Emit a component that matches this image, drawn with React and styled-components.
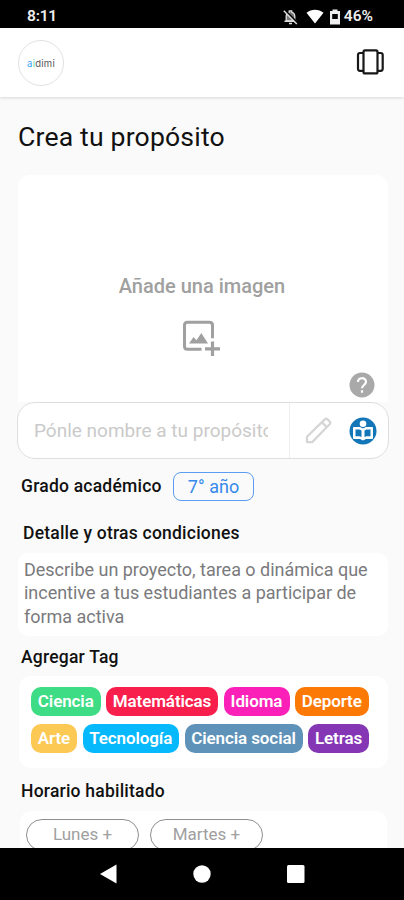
import React from "react";
import styled, { createGlobalStyle } from "styled-components";

const Global = createGlobalStyle`
  * { box-sizing: border-box; }
  body { margin: 0; background: #fafafa; font-family: Roboto, "Liberation Sans", sans-serif; }
  svg { display: block; flex: none; }
`;
const Screen = styled.div`
  width: 404px; height: 900px; overflow: hidden;
  display: flex; flex-direction: column; background: #fafafa; color: #111;
`;
const StatusBar = styled.div`
  height: 28px; flex: none; background: #000; color: #eee;
  display: flex; align-items: center; padding: 5px 31px 0 27px;
  font-size: 15.5px; line-height: 23px; font-weight: 600;
`;
const Clock = styled.span`flex: 1; letter-spacing: -0.2px;`;
const StatusIcons = styled.div`display: flex; align-items: center;`;
const WifiIcon = styled.svg`margin: 0 3px 0 8px;`;
const Battery = styled.span`font-size: 15.5px; margin-left: 1px;`;
const Header = styled.header`
  height: 69px; flex: none; background: #fff; padding: 0 20px 0 18px;
  display: flex; align-items: center; justify-content: space-between;
  box-shadow: 0 1px 3px rgba(0,0,0,.14); z-index: 1;
`;
const Logo = styled.div`
  width: 46px; height: 46px; border: 1px solid #e2e2e2; border-radius: 50%;
  display: flex; align-items: center; justify-content: center;
  font: 400 9.5px/12px Inter, sans-serif; color: #555; letter-spacing: .25px;
  padding-top: 2px;
`;
const LogoLetter = styled.span`color: ${p => p.$color};`;
const CarouselIcon = styled.svg`margin-bottom: 2px;`;
const Content = styled.main`
  flex: 1; min-height: 0; overflow: hidden; padding: 0 15px 0 17px;
  display: flex; flex-direction: column;
`;
const Title = styled.h1`
  margin: 25px 0 23px 1px; font-size: 26.6px; line-height: 30px; font-weight: 450;
  letter-spacing: .17px;
`;
const ImageCard = styled.section`
  height: 227px; flex: none; background: #fff; border-radius: 12px 12px 0 0;
  margin: 0 1px; padding: 99px 13px 0; color: #a0a0a0;
  display: flex; flex-direction: column; align-items: center;
`;
const ImageLabel = styled.div`font-size: 20px; line-height: 24px; font-weight: 500; margin-right: 2px;`;
const PictureIcon = styled.svg`margin: 22px 4px 0 0;`;
const HelpIcon = styled.svg`align-self: flex-end; margin-top: 15px;`;
const NameField = styled.div`
  height: 57px; flex: none; border: 1.5px solid #dedede; border-radius: 18px;
  background: #fff; display: flex; align-items: center; padding-left: 16px;
`;
const Placeholder = styled.div`
  width: 234px; overflow: hidden; white-space: nowrap; color: #cacaca;
  font-size: 19px; line-height: 26px;
`;
const FieldTools = styled.div`
  align-self: stretch; margin-left: 21px; flex: 1; border-left: 1px solid #eee;
  display: flex; align-items: center; padding-left: 15px; gap: 17px;
`;
const GradeRow = styled.div`
  display: flex; align-items: center; margin: 12px 0 0 4px; height: 30px; flex: none;
`;
const Label = styled.h2`
  margin: ${p => p.$margin || "0"}; font-size: 17.5px; line-height: 22px; font-weight: 500;
  letter-spacing: .22px; white-space: nowrap;
`;
const GradeLabel = styled(Label)`width: 152px;`;
const GradeChip = styled.span`
  width: 81px; height: 29px; border: 1.3px solid #5a9df2; border-radius: 8px;
  color: #3489ec; font-size: 18px; line-height: 28px; text-align: center;
`;
const Description = styled.p`
  margin: 9px 0 0 1px; width: 370px; height: 83px; flex: none; border-radius: 10px; background: #fff; color: #7a7a7d;
  padding: 5px 0 0 6px; font-size: 18px; line-height: 23.4px; letter-spacing: -.02px; white-space: pre;
`;
const TagCard = styled.div`
  margin: 8px 0 0 2px; width: 369px; height: 92px; flex: none; background: #fff; border-radius: 12px;
  padding: 11px 0 0 12px; display: flex; flex-direction: column; gap: 8px;
`;
const TagRow = styled.div`display: flex; gap: 5.5px;`;
const Tag = styled.span`
  width: ${p => p.$w}px; height: 29px; border-radius: 10px; background: ${p => p.$color};
  color: #fff; font-size: 17px; line-height: 28px; font-weight: 600; text-align: center;
  letter-spacing: -.1px; white-space: nowrap;
`;
const DayCard = styled.div`
  margin: 9px 0 0 3px; width: 367px; height: 60px; flex: none; background: #fff; border-radius: 12px;
  padding: 8px 0 0 6px; display: flex; gap: 11px;
`;
const Day = styled.span`
  width: 113px; height: 32px; border: 1px solid #8f8f8f; border-radius: 16px; color: #a0a0a0;
  font-size: 17px; line-height: 29px; text-align: center;
`;
const NavBar = styled.nav`
  height: 52px; flex: none; background: #000; display: flex; align-items: center;
  padding-left: 100px; gap: 76px; z-index: 1;
`;

const rows = [
  [["Ciencia", "#3edc85", 69.5], ["Matemáticas", "#f91f4d", 112], ["Idioma", "#fb20b8", 66], ["Deporte", "#fd7905", 73.5]],
  [["Arte", "#fcc954", 46], ["Tecnología", "#06b8fc", 96.5], ["Ciencia social", "#5e92b8", 118], ["Letras", "#8436b5", 61]],
];

export default function App() {
  return (
    <Screen>
      <Global />
      <StatusBar>
        <Clock>8:11</Clock>
        <StatusIcons>
          <svg width="15" height="16" viewBox="0 0 15 16">
            <path d="M3.2 12V7.5C3.2 5 4.5 3.7 6.3 3.2V1.8h2.4v1.4c1.8.5 3.1 1.8 3.1 4.3V12z" fill="#777" stroke="#ddd" strokeWidth="1.3" />
            <path d="M1.5 12.3h12M6 14.5h3" stroke="#ddd" strokeWidth="1.5" />
            <path d="M1.8 1.2 14.6 14" stroke="#000" strokeWidth="2" />
            <path d="M.8 1.8 13.8 15" stroke="#ddd" strokeWidth="1.5" />
          </svg>
          <WifiIcon width="18" height="15" viewBox="0 0 18 15">
            <path d="M.5 3.8C5.5-.2 12.5-.2 17.5 3.8L9 14.5z" fill="#fff" />
          </WifiIcon>
          <svg width="16" height="16" viewBox="0 0 16 16">
            <path d="M5.5 2V.5h5V2H13v13.5H3V2z" fill="#eee" />
            <path d="M5.2 5h5.6v5H5.2z" fill="#000" />
          </svg>
          <Battery>46%</Battery>
        </StatusIcons>
      </StatusBar>
      <Header>
        <Logo>
          <LogoLetter $color="#42a5f5">a</LogoLetter>
          <LogoLetter $color="#67d5bc">i</LogoLetter>
          <span>dimi</span>
        </Logo>
        <CarouselIcon width="28" height="26" viewBox="0 0 28 26" fill="none" stroke="#181818" strokeWidth="2.2" strokeLinejoin="round">
          <rect x="7.5" y="1.4" width="14" height="23" rx="1.5" />
          <path d="M7.5 4H4Q2 4 2 6v13.8q0 2 2 2h3.5M21.5 4h3.2q2 0 2 2v13.8q0 2-2 2h-3.2" />
        </CarouselIcon>
      </Header>
      <Content>
        <Title>Crea tu propósito</Title>
        <ImageCard>
          <ImageLabel>Añade una imagen</ImageLabel>
          <PictureIcon width="38" height="37" viewBox="0 0 38 37">
            <path d="M19.5 29.3H5.5q-3 0-3-3v-21q0-3 3-3h22q3 0 3 3v13" fill="none" stroke="#a0a0a0" strokeWidth="3" />
            <path d="M7 23.5 11.5 17l3 3.3L19.3 13 26 23.5z" fill="#a0a0a0" />
            <path d="M30.5 21.5V36M23 28.8h15" stroke="#a0a0a0" strokeWidth="3.2" />
          </PictureIcon>
          <HelpIcon width="26" height="26" viewBox="0 0 26 26">
            <circle cx="13" cy="13" r="12.5" fill="#a9a9a9" />
            <path d="M9 10c0-5 8-5 8-.2 0 3.2-4 3.2-4 6.5M13 18.2v2.6" fill="none" stroke="#fff" strokeWidth="2.2" />
          </HelpIcon>
        </ImageCard>
        <NameField>
          <Placeholder>Pónle nombre a tu propósito</Placeholder>
          <FieldTools>
            <svg width="27" height="27" viewBox="0 0 28 28" fill="none" stroke="#d6d6d6" strokeWidth="2.4" strokeLinejoin="round">
              <path d="M2 26v-5.5L20.5 2.5Q22 1 23.5 2.5l2 2Q27 6 25.5 7.5L7.5 26z" />
              <path d="m17.5 5.5 5 5" />
            </svg>
            <svg width="28" height="28" viewBox="0 0 28 28">
              <circle cx="14" cy="14" r="13.5" fill="#1276b9" />
              <circle cx="14" cy="6.8" r="3.3" fill="#fff" />
              <path d="M4.5 10.5H11l3 1.5 3-1.5h6.5v11H17L14 23l-3-1.5H4.5z" fill="#fff" stroke="#fff" strokeLinejoin="round" />
              <path d="M6.5 12.5h4l2 .9v6.6l-2-.7h-4zM21.5 12.5h-4l-2 .9v6.6l2-.7h4z" fill="#1276b9" />
            </svg>
          </FieldTools>
        </NameField>
        <GradeRow>
          <GradeLabel>Grado académico</GradeLabel>
          <GradeChip>7° año</GradeChip>
        </GradeRow>
        <Label $margin="21px 0 0 6px">Detalle y otras condiciones</Label>
        <Description>{"Describe un proyecto, tarea o dinámica que\nincentive a tus estudiantes a participar de\nforma activa"}</Description>
        <Label $margin="10px 0 0 4px">Agregar Tag</Label>
        <TagCard>
          {rows.map((row, i) => (
            <TagRow key={i}>
              {row.map(([name, color, w]) => (
                <Tag key={name} $color={color} $w={w}>{name}</Tag>
              ))}
            </TagRow>
          ))}
        </TagCard>
        <Label $margin="12px 0 0 4px">Horario habilitado</Label>
        <DayCard>
          <Day>Lunes +</Day>
          <Day>Martes +</Day>
        </DayCard>
      </Content>
      <NavBar>
        <svg width="17" height="20" viewBox="0 0 17 20"><path d="M0 10 16.5 .5v19z" fill="#fff" /></svg>
        <svg width="18" height="18" viewBox="0 0 18 18"><circle cx="9" cy="9" r="8.7" fill="#fff" /></svg>
        <svg width="18" height="18" viewBox="0 0 18 18"><rect width="17.5" height="18" rx="1.5" fill="#fff" /></svg>
      </NavBar>
    </Screen>
  );
}
